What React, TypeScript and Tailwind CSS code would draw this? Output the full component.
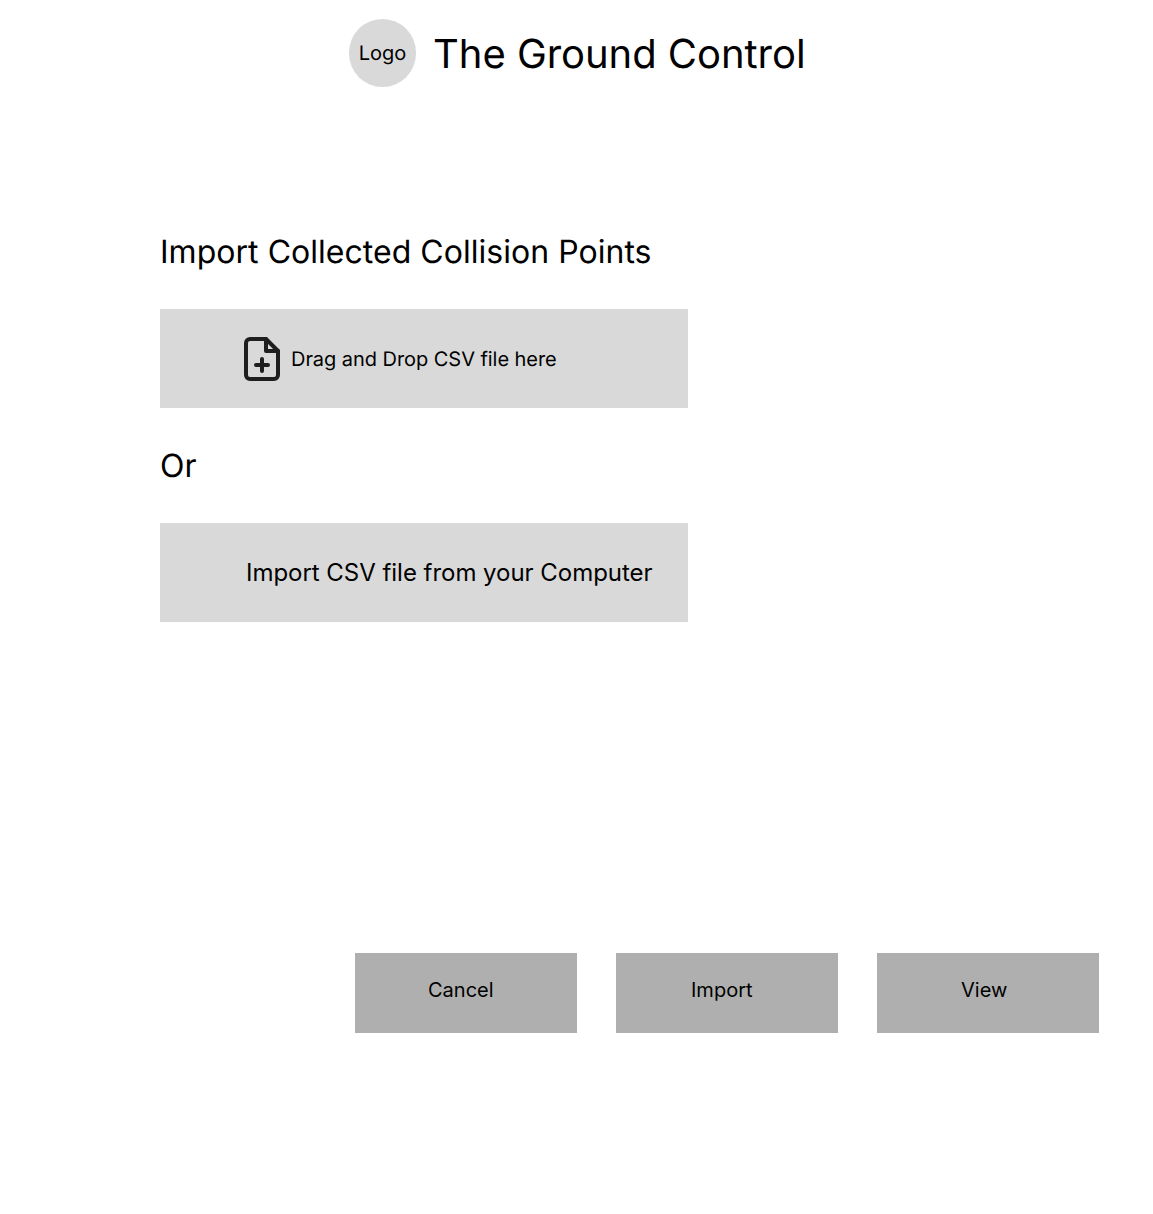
const actions = [
  { label: "Cancel", pad: "pl-[73px]" },
  { label: "Import", pad: "pl-[75px]" },
  { label: "View", pad: "pl-[84px]" },
];

function FilePlusIcon() {
  return (
    <svg className="h-12 w-12 shrink-0" viewBox="0 0 48 48" fill="none" stroke="#1e1e1e" strokeWidth="4" strokeLinecap="round" strokeLinejoin="round">
      <path d="M28 4H12a4 4 0 0 0-4 4v32a4 4 0 0 0 4 4h24a4 4 0 0 0 4-4V16L28 4Z" />
      <path d="M28 4v12h12M24 36V24M18 30h12" />
    </svg>
  );
}

export default function App() {
  return (
    <div className="flex h-[1214px] w-[1153px] flex-col bg-white font-['Inter',sans-serif] text-black antialiased [text-rendering:geometricPrecision]">
      <header className="flex pl-[349px] pt-[19px]">
        <div className="flex h-[68px] w-[67px] items-center justify-center rounded-full bg-[#d9d9d9] text-[20px] leading-6">
          Logo
        </div>
        <h1 className="ml-[17px] mt-[11px] whitespace-nowrap text-[40px] leading-[48px] tracking-[-0.04px]">
          The Ground Control
        </h1>
      </header>
      <main className="ml-[160px] mt-[145px] flex w-[528px] flex-col self-start">
        <h2 className="whitespace-nowrap text-[32px] leading-[39px] tracking-[0.03px]">
          Import Collected Collision Points
        </h2>
        <div className="mt-[38px] flex h-[99px] items-center bg-[#d9d9d9] pl-[78px]">
          <FilePlusIcon />
          <span className="ml-[5px] whitespace-nowrap text-[20px] leading-6 tracking-[-0.05px]">
            Drag and Drop CSV file here
          </span>
        </div>
        <p className="mt-[38px] text-[32px] leading-[39px]">Or</p>
        <button className="mt-[38px] flex h-[99px] items-center whitespace-nowrap bg-[#d9d9d9] pl-[86px] text-[24px] leading-[29px] tracking-[-0.03px]">
          Import CSV file from your Computer
        </button>
      </main>
      <footer className="mt-[331px] flex gap-[39px] pl-[355px]">
        {actions.map(({ label, pad }) => (
          <button
            key={label}
            className={`flex h-20 w-[222px] items-start bg-[#afafaf] pt-[25px] text-[20px] leading-6 ${pad}`}
          >
            {label}
          </button>
        ))}
      </footer>
    </div>
  );
}
